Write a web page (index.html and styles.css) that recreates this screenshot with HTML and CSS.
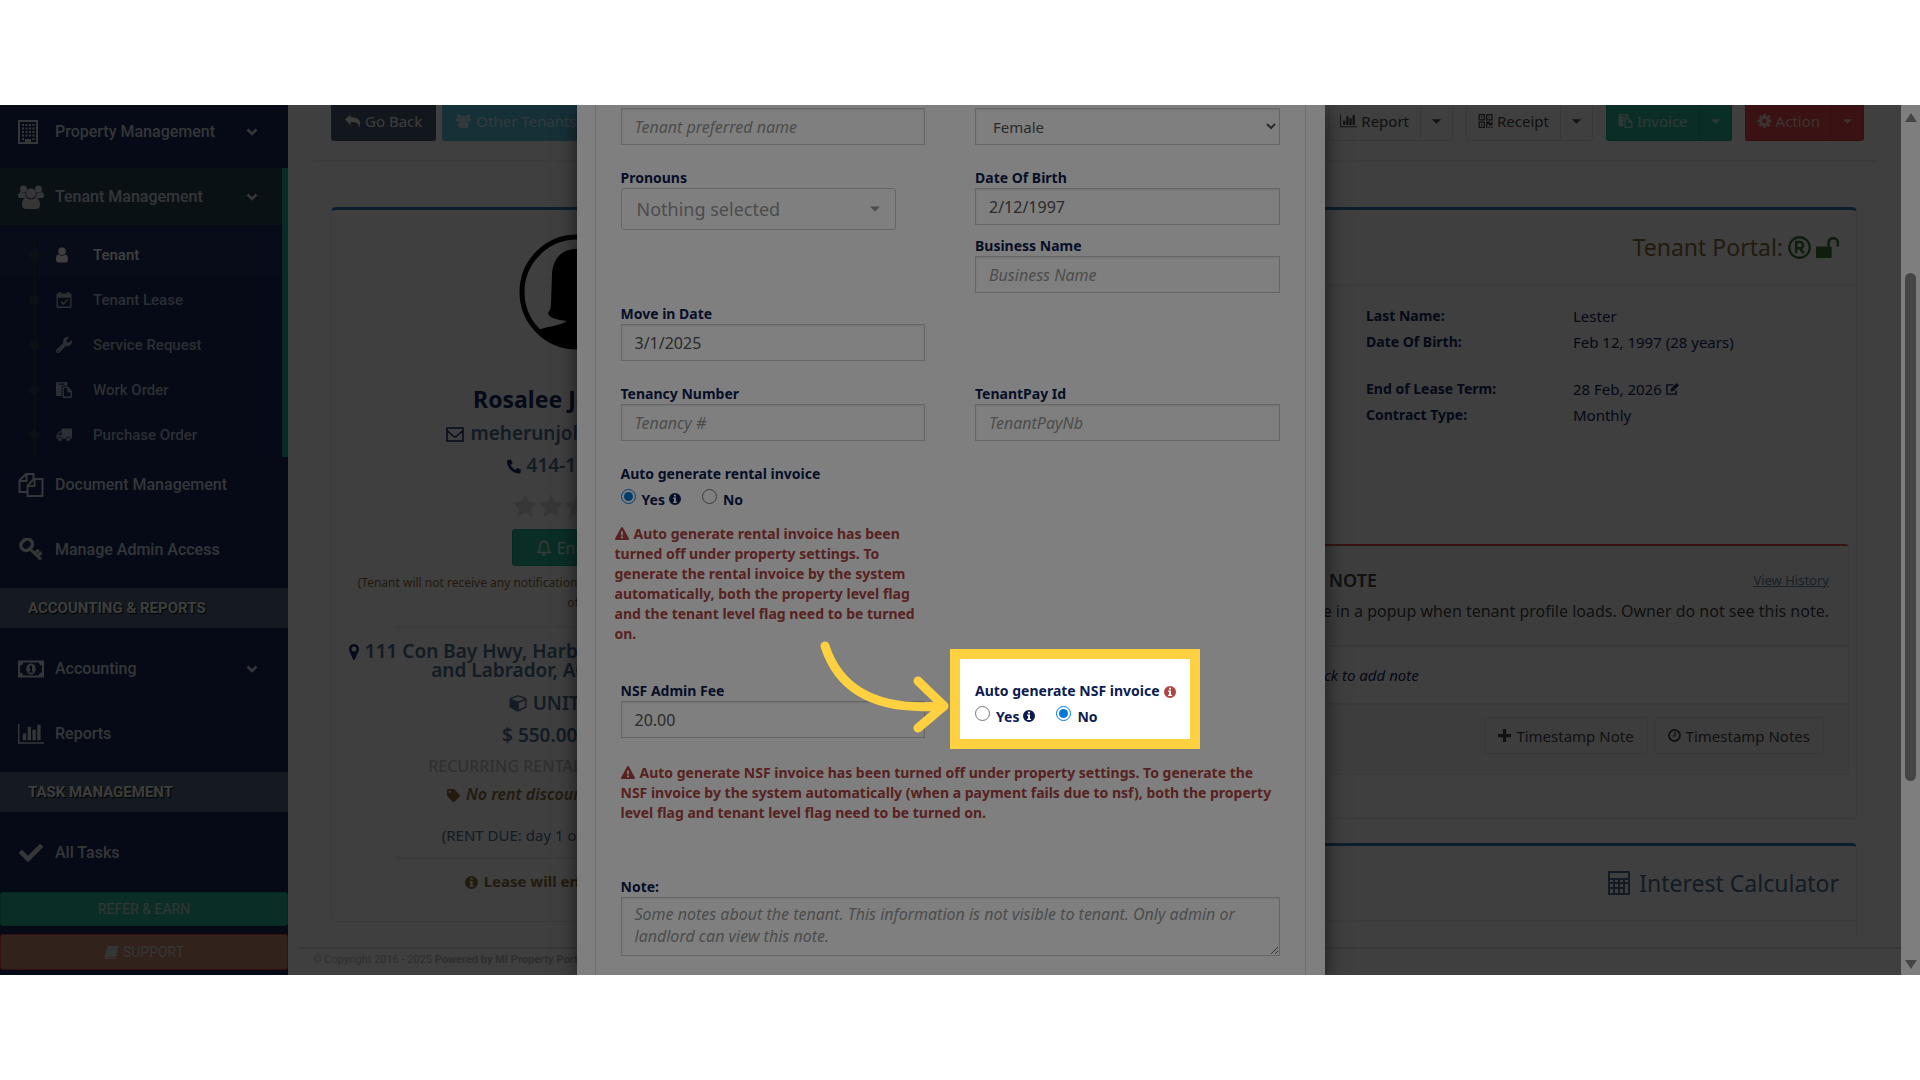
FILE: index.html
```html
<!DOCTYPE html>
<html lang="en">
<head>
    <meta charset="UTF-8">
    <meta name="viewport" content="width=device-width, initial-scale=1.0">
    <title>Tenant - Edit</title>
    <link rel="stylesheet" href="styles.css">
</head>
<body>

<!-- Icon set -->
<svg class="icon-defs" aria-hidden="true">
    <symbol id="i-building" viewBox="0 0 20 24"><path fill-rule="evenodd" d="M0 0h20v24H0zM2 2v20h5v-3h6v3h5V2zM4 4h2v2H4zm3.500 0h2v2h-2zm3.500 0h2v2h-2zm3.500 0h2v2h-2zM4 7.500h2v2H4zm3.500 0h2v2h-2zm3.500 0h2v2h-2zm3.500 0h2v2h-2zM4 11h2v2H4zm3.500 0h2v2h-2zm3.500 0h2v2h-2zm3.500 0h2v2h-2zM4 14.500h2v2H4zm3.500 0h2v2h-2zm3.500 0h2v2h-2zm3.500 0h2v2h-2zM4 18h2v2H4zm10.500 0h2v2h-2z"/></symbol>
    <symbol id="i-users" viewBox="0 0 26 24"><circle cx="5.500" cy="4" r="3.500"/><circle cx="20.500" cy="4" r="3.500"/><path d="M0 11c0-3 1.500-4 3-4 1 1 3 1 4.500.5C7 10 8 11.500 9 13H3c-2 0-3-.5-3-2zM26 11c0-3-1.500-4-3-4-1 1-3 1-4.500.5C19 10 18 11.500 17 13h6c2 0 3-.5 3-2z"/><circle cx="13" cy="8.500" r="5"/><path d="M4 20c0-5 2-7 4.500-7.200 2.500 2 6.500 2 9 0C20 13 22 15 22 20c0 2.500-1.500 4-4 4H8c-2.500 0-4-1.500-4-4z"/></symbol>
    <symbol id="i-user" viewBox="0 0 12 15"><circle cx="6" cy="3.800" r="3.800"/><path d="M0 12c0-3.500 1-4.800 2.600-5 2 1.800 4.800 1.800 6.800 0C11 7.200 12 8.500 12 12c0 2-1 3-2.500 3h-7C1 15 0 14 0 12z"/></symbol>
    <symbol id="i-calendar" viewBox="0 0 16 17"><path fill-rule="evenodd" d="M0 3c0-1 .5-1.500 2-1.500V1c0-1.300 3-1.300 3 0v.5h6V1c0-1.300 3-1.300 3 0v.5c1.500 0 2 .5 2 1.500v12.500c0 1-.5 1.500-1.500 1.500h-13C.5 17 0 16.500 0 15.500zM1.500 6v9.500h13V6z"/><path d="M4.500 10l2.700 2.800L12 8" fill="none" stroke="currentColor" stroke-width="1.500"/></symbol>
    <symbol id="i-wrench" viewBox="0 0 512 512"><path fill-rule="evenodd" d="M507.730 109.100c-2.240-9.030-13.540-12.090-20.120-5.510l-74.360 74.360-67.880-11.310-11.310-67.880 74.360-74.360c6.620-6.620 3.430-17.900-5.660-20.160-47.380-11.740-99.550.91-136.580 37.930-39.640 39.640-50.550 97.100-34.050 147.200L18.740 402.760c-24.990 24.990-24.990 65.510 0 90.500 24.990 24.990 65.510 24.990 90.500 0l213.210-213.210c50.120 16.710 107.470 5.680 147.370-34.220 37.070-37.070 49.700-89.320 37.910-136.730zM64 472c-13.250 0-24-10.750-24-24 0-13.260 10.750-24 24-24s24 10.740 24 24c0 13.250-10.750 24-24 24z"/></symbol>
    <symbol id="i-paste" viewBox="0 0 17 17"><path fill-rule="evenodd" d="M0 1c0-.6.400-1 1-1h10c.6 0 1 .4 1 1v3H8C6.500 4 6 5 6 6v9H1c-.6 0-1-.4-1-1zm3 .5V3h6V1.500z"/><path fill-rule="evenodd" d="M7 6c0-.6.400-1 1-1h5l4 4.500V16c0 .6-.4 1-1 1H8c-.6 0-1-.4-1-1zm1.500.5v9h7V11H12V6.500z"/></symbol>
    <symbol id="i-truck" viewBox="0 0 17 14"><path d="M17 1v10h-1.500a2.500 2.500 0 0 0-5 0H6.500a2.500 2.500 0 0 0-5 0H.5V7L3.500 3H6V1c0-.6.400-1 1-1h9c.6 0 1 .4 1 1zM2 7h4V4.500H4z" fill-rule="evenodd"/><circle cx="4" cy="11.500" r="2"/><circle cx="13" cy="11.500" r="2"/></symbol>
    <symbol id="i-files" viewBox="0 0 25 24"><path d="M8.500 19H1V7.500L7.500 1H15v5M1 8h7V1M9 12.500L15.500 6H24v17H9zM9 13h7V6" fill="none" stroke="currentColor" stroke-width="2"/></symbol>
    <symbol id="i-key" viewBox="0 0 24 24"><rect x="1.700" y="2" width="12" height="10" rx="5" transform="rotate(-42 7.500 7)" fill="none" stroke="currentColor" stroke-width="3.500"/><path d="M11 11l11 10.500M16 15l4-3M19 17.500l3.500-3" fill="none" stroke="currentColor" stroke-width="3"/></symbol>
    <symbol id="i-money" viewBox="0 0 26 17"><path fill-rule="evenodd" d="M0 0h26v17H0zM5 2c0 2-1 3-3 3v7c2 0 3 1 3 3h16c0-2 1-3 3-3V5c-2 0-3-1-3-3z"/><ellipse cx="13" cy="8.500" rx="4.800" ry="5.500"/><path class="cut" d="M11 6.500l1.500-1.500h1.500v6h1.500v1h-5v-1H12V7l-.5.500z"/></symbol>
    <symbol id="i-chart" viewBox="0 0 27 21"><path d="M0 0h1.500v19H27v1.500H0zM5 10h3.500v7H5zm5-7h3.500v14H10zm5 3h3.500v11H15zm5-5h3.500v16H20z"/></symbol>
    <symbol id="i-check" viewBox="0 0 512 512"><path d="M173.898 439.404l-166.400-166.400c-9.997-9.997-9.997-26.206 0-36.204l36.203-36.204c9.997-9.998 26.207-9.998 36.204 0L192 312.690 432.095 72.596c9.997-9.997 26.207-9.997 36.204 0l36.203 36.204c9.997 9.997 9.997 26.206 0 36.204l-294.400 294.401c-9.998 9.997-26.207 9.997-36.204-.001z"/></symbol>
    <symbol id="i-chevron" viewBox="0 0 12 8"><path d="M1.500 1.500L6 6l4.500-4.500" fill="none" stroke="currentColor" stroke-width="2.600"/></symbol>
    <symbol id="i-book" viewBox="0 0 15 14"><path d="M4 0h10c1 0 1.200.6 1 1.300l-3 9.700c-.2.700-.7 1-1.500 1H3c-.8 0-.8 1 0 1h8.500L14.500 4v1l-2.700 9H2.500C.5 14-.3 12.500.2 11L3 1c.2-.7.500-1 1-1z"/></symbol>
    <symbol id="i-reply" viewBox="0 0 16 14"><path d="M6 0v3c6 0 10 1.500 10 7 0 1.500-.5 3-1.200 4 .4-5-3-6-8.800-6v3.500L0 5.500z"/></symbol>
    <symbol id="i-envelope" viewBox="0 0 18 15"><path d="M1 1h16v13H1zM1 3.500l6.500 5.700q1.500 1.200 3 0L17 3.500" fill="none" stroke="currentColor" stroke-width="1.500"/></symbol>
    <symbol id="i-phone" viewBox="0 0 512 512"><path transform="matrix(-1 0 0 1 512 0)" d="M493.400 24.600l-104-24c-11.300-2.600-22.900 3.300-27.500 13.900l-48 112c-4.200 9.800-1.400 21.300 6.900 28l60.600 49.600c-36 76.700-98.900 140.500-177.200 177.200l-49.600-60.600c-6.800-8.300-18.200-11.100-28-6.900l-112 48C3.900 366.500-2 378.100.6 389.400l24 104C27.100 504.200 36.700 512 48 512c256.100 0 464-207.500 464-464 0-11.200-7.700-20.900-18.600-23.400z"/></symbol>
    <symbol id="i-star" viewBox="0 0 24 23"><path d="M12 0l3.600 7.500 8.400 1.200-6 5.800L19.500 23 12 19l-7.500 4L6 14.500 0 8.700l8.400-1.200z"/></symbol>
    <symbol id="i-bell" viewBox="0 0 14 16"><path d="M7 1.500C4 1.500 3 4 3 6.500 3 9.500 2 11 1 12.500h12c-1-1.500-2-3-2-6C11 4 10 1.500 7 1.500zM7 0v2M5.500 14q1.500 2 3 0" fill="none" stroke="currentColor" stroke-width="1.400"/></symbol>
    <symbol id="i-marker" viewBox="0 0 10 16"><path fill-rule="evenodd" d="M5 0a5 5 0 0 1 5 5c0 1-.2 1.700-.5 2.300L6 15.300c-.4.900-1.600.9-2 0L.5 7.300C.2 6.700 0 6 0 5a5 5 0 0 1 5-5zm0 2.500a2.500 2.500 0 1 0 0 5 2.500 2.500 0 0 0 0-5z"/></symbol>
    <symbol id="i-cube" viewBox="0 0 18 18"><path fill-rule="evenodd" d="M9 0l9 3.500V13l-9 5-9-5V3.500zM2 4.200l7 2.800 7-2.800-7-2.700zM16.500 5.700L10 8.400v7.300l6.500-3.500z"/></symbol>
    <symbol id="i-tag" viewBox="0 0 512 512"><path fill-rule="evenodd" d="M0 252.118V48C0 21.490 21.490 0 48 0h204.118a48 48 0 0 1 33.941 14.059l211.882 211.882c18.745 18.745 18.745 49.137 0 67.882L293.823 497.941c-18.745 18.745-49.137 18.745-67.882 0L14.059 286.059A48 48 0 0 1 0 252.118zM112 64c-26.510 0-48 21.490-48 48s21.490 48 48 48 48-21.490 48-48-21.490-48-48-48z"/></symbol>
    <symbol id="i-info" viewBox="0 0 12 12"><path fill-rule="evenodd" d="M6 0a6 6 0 1 1 0 12A6 6 0 0 1 6 0zM5 1.800v1.700h2V1.800zM4 4.500v1.200h1v3H4V10h4V8.700H7V4.500z"/></symbol>
    <symbol id="i-warning" viewBox="0 0 14 13"><path fill-rule="evenodd" d="M7 0c.4 0 .7.200.9.500l6 11c.3.700 0 1.500-.9 1.500H1c-.9 0-1.200-.8-.9-1.500l6-11C6.300.2 6.600 0 7 0zM6 4.500L6.200 8.500h1.600L8 4.500zM6 9.500v1.700h2V9.500z"/></symbol>
    <symbol id="i-qr" viewBox="0 0 13 13"><path fill-rule="evenodd" d="M0 0h6v6H0zM1.200 1.200v3.600h3.600V1.200zM7 0h6v6H7zM8.200 1.200v3.600h3.600V1.200zM0 7h6v6H0zm1.200 1.200v3.600h3.600V8.200zM2.400 2.400h1.200v1.200H2.400zm7 0h1.200v1.200H9.400zm-7 7h1.200v1.200H2.400zM7 7h3.500v1.200H12V7h1v3.500H9.500V9.300H8.300V13H7zm2.500 4.700h1.200V13H9.500zm2.300 0H13V13h-1.200z"/></symbol>
    <symbol id="i-cog" viewBox="0 0 14 14"><path d="M7 0v14M0 7h14M2 2l10 10M12 2L2 12" stroke="currentColor" stroke-width="2.700"/><circle cx="7" cy="7" r="3.700" fill="none" stroke="currentColor" stroke-width="3"/><circle class="hole" cx="7" cy="7" r="2.200"/></symbol>
    <symbol id="i-unlock" viewBox="0 0 22 22"><rect y="10" width="15" height="11" rx="1"/><path d="M12 10V6.500a4.500 4.500 0 0 1 9 0V10" fill="none" stroke="currentColor" stroke-width="2.500"/></symbol>
    <symbol id="i-registered" viewBox="0 0 24 24"><circle cx="12" cy="12" r="10.700" fill="none" stroke="currentColor" stroke-width="2.400"/><path d="M8.500 18V6.200h4a3.200 3.200 0 0 1 0 6.600h-4M12.500 12.800L16.500 18" fill="none" stroke="currentColor" stroke-width="2.600"/></symbol>
    <symbol id="i-edit" viewBox="0 0 15 13"><path d="M11 8v4H1V2h7" fill="none" stroke="currentColor" stroke-width="1.500"/><path d="M5 9V6.500L11.500 0 14 2.500 7.500 9z"/></symbol>
    <symbol id="i-clock" viewBox="0 0 13 13"><circle cx="6.500" cy="6.500" r="5.500" fill="none" stroke="currentColor" stroke-width="1.900"/><path d="M7 3v4H4.500" fill="none" stroke="currentColor" stroke-width="1.200"/></symbol>
    <symbol id="i-plus" viewBox="0 0 12 12"><path d="M4.500 0h3v4.500H12v3H7.500V12h-3V7.500H0v-3h4.500z"/></symbol>
    <symbol id="i-calc" viewBox="0 0 22 24"><path fill-rule="evenodd" d="M1 0h20c.6 0 1 .4 1 1v22c0 .6-.4 1-1 1H1c-.6 0-1-.4-1-1V1c0-.6.400-1 1-1zm1 2v5h18V2zm0 7v2h3V9zm5 0v2h3V9zm5 0v2h3V9zm5 0v2h3V9zM2 13v3h3v-3zm5 0v3h3v-3zm5 0v3h3v-3zm5 0v9h3v-9zM2 18v4h3v-4zm5 0v4h3v-4zm5 0v4h3v-4z"/></symbol>
    <symbol id="i-caret" viewBox="0 0 8 4"><path d="M0 0h8L4 4z"/></symbol>
</svg>

<div class="window">

    <div class="app">
        <!-- Left navigation -->
        <nav class="sidebar">
            <a href="#" class="nav-item"><svg class="nav-icon"><use href="#i-building"/></svg><span>Property Management</span><svg class="chev"><use href="#i-chevron"/></svg></a>
            <div class="nav-group">
                <a href="#" class="nav-item active"><svg class="nav-icon"><use href="#i-users"/></svg><span>Tenant Management</span><svg class="chev"><use href="#i-chevron"/></svg></a>
                <div class="subnav">
                    <a href="#" class="current"><svg><use href="#i-user"/></svg>Tenant</a>
                    <a href="#"><svg><use href="#i-calendar"/></svg>Tenant Lease</a>
                    <a href="#"><svg><use href="#i-wrench"/></svg>Service Request</a>
                    <a href="#"><svg><use href="#i-paste"/></svg>Work Order</a>
                    <a href="#"><svg><use href="#i-truck"/></svg>Purchase Order</a>
                </div>
            </div>
            <a href="#" class="nav-item"><svg class="nav-icon"><use href="#i-files"/></svg><span>Document Management</span></a>
            <a href="#" class="nav-item"><svg class="nav-icon"><use href="#i-key"/></svg><span>Manage Admin Access</span></a>
            <h2 class="nav-title">ACCOUNTING &amp; REPORTS</h2>
            <a href="#" class="nav-item"><svg class="nav-icon"><use href="#i-money"/></svg><span>Accounting</span><svg class="chev"><use href="#i-chevron"/></svg></a>
            <a href="#" class="nav-item"><svg class="nav-icon"><use href="#i-chart"/></svg><span>Reports</span></a>
            <h2 class="nav-title">TASK MANAGEMENT</h2>
            <a href="#" class="nav-item"><svg class="nav-icon"><use href="#i-check"/></svg><span>All Tasks</span></a>
            <button class="side-btn refer">REFER &amp; EARN</button>
            <button class="side-btn support"><svg><use href="#i-book"/></svg>SUPPORT</button>
        </nav>

        <!-- Tenant page -->
        <main class="page">
            <div class="toolbar">
                <button class="btn back"><svg><use href="#i-reply"/></svg>Go Back</button>
                <button class="btn others"><svg><use href="#i-users"/></svg>Other Tenants</button>
                <div class="btn-group first"><button class="btn"><svg class="wide"><use href="#i-chart"/></svg>Report</button><button class="btn drop" aria-label="Report menu"><svg><use href="#i-caret"/></svg></button></div>
                <div class="btn-group"><button class="btn"><svg><use href="#i-qr"/></svg>Receipt</button><button class="btn drop" aria-label="Receipt menu"><svg><use href="#i-caret"/></svg></button></div>
                <div class="btn-group green"><button class="btn"><svg><use href="#i-paste"/></svg>Invoice</button><button class="btn drop" aria-label="Invoice menu"><svg><use href="#i-caret"/></svg></button></div>
                <div class="btn-group red"><button class="btn"><svg><use href="#i-cog"/></svg>Action</button><button class="btn drop" aria-label="Action menu"><svg><use href="#i-caret"/></svg></button></div>
            </div>

            <div class="columns">
                <section class="card profile">
                    <svg class="avatar" viewBox="0 0 116 116"><circle cx="58" cy="58" r="55" fill="none" stroke="#000" stroke-width="5"/><path d="M58 15c-16 0-24 10-25 25l-1 30c0 4-1 6-3 9 1 5 9 7 19 8-8 5-18 5-29 9a56 56 0 0 0 78 0c-11-4-21-4-29-9 10-1 18-3 19-8-2-3-3-5-3-9l-1-30c-1-15-9-25-25-25z"/></svg>
                    <h1>Rosalee Joy Lester</h1>
                    <p class="contact"><svg><use href="#i-envelope"/></svg>meherunjolly@gmail.com</p>
                    <p class="contact"><svg class="small"><use href="#i-phone"/></svg>414-123-4567</p>
                    <div class="stars"><svg><use href="#i-star"/></svg><svg><use href="#i-star"/></svg><svg><use href="#i-star"/></svg><svg><use href="#i-star"/></svg><svg><use href="#i-star"/></svg></div>
                    <button class="enable"><svg><use href="#i-bell"/></svg>Enabled</button>
                    <p class="hint">(Tenant will not receive any notification while the email alerts setting is turned<br>off)</p>
                    <hr>
                    <p class="address"><svg><use href="#i-marker"/></svg>111 Con Bay Hwy, Harbour View, Newfoundland<br>and Labrador, A0K 1M0, Canada</p>
                    <p class="unit"><svg><use href="#i-cube"/></svg>UNIT # 1012</p>
                    <p class="unit">$ 550.00 /month</p>
                    <p class="recurring">RECURRING RENTAL INVOICE AMOUNT</p>
                    <p class="discount"><svg><use href="#i-tag"/></svg>No rent discount has been found</p>
                    <p class="due">(RENT DUE: day 1 of every new month)</p>
                    <hr>
                    <p class="lease"><svg><use href="#i-info"/></svg>Lease will end in 11 months</p>
                </section>

                <div class="right">
                    <section class="card details">
                        <h2 class="portal">Tenant Portal: <svg><use href="#i-registered"/></svg><svg><use href="#i-unlock"/></svg></h2>
                        <dl>
                            <dt>Last Name:</dt><dd>Lester</dd>
                            <dt>Date Of Birth:</dt><dd>Feb 12, 1997 (28 years)</dd>
                            <dt class="space">End of Lease Term:</dt><dd class="space">28 Feb, 2026 <svg><use href="#i-edit"/></svg></dd>
                            <dt>Contract Type:</dt><dd>Monthly</dd>
                        </dl>
                        <div class="note-card">
                            <header>
                                <div class="note-head"><h3>TENANT NOTE</h3><a href="#">View History</a></div>
                                <p>Display this note in a popup when tenant profile loads. Owner do not see this note.</p>
                            </header>
                            <p class="add-note">Just click to add note</p>
                            <footer>
                                <button class="btn plain"><svg><use href="#i-plus"/></svg>Timestamp Note</button>
                                <button class="btn plain"><svg><use href="#i-clock"/></svg>Timestamp Notes</button>
                            </footer>
                        </div>
                    </section>
                    <section class="card calculator">
                        <h2><svg><use href="#i-calc"/></svg>Interest Calculator</h2>
                    </section>
                </div>
            </div>

            <footer class="copyright">&copy; Copyright 2016 - 2025 <b>Powered by MI Property Portal</b></footer>
        </main>
    </div>

    <!-- Edit dialog -->
    <div class="backdrop">
        <div class="scrollbar"><svg viewBox="0 0 12 9"><path d="M6 0l6 9H0z"/></svg><span></span><svg viewBox="0 0 12 9"><path d="M0 0h12L6 9z"/></svg></div>
        <div class="modal" role="dialog">
            <form class="panel">
                <div class="row first">
                    <input class="control" type="text" placeholder="Tenant preferred name" aria-label="Tenant preferred name">
                    <select class="control" aria-label="Gender"><option>Female</option></select>
                </div>
                <div class="row">
                    <div class="field">
                        <label for="pronouns">Pronouns</label>
                        <button type="button" id="pronouns" class="picker">Nothing selected<svg><use href="#i-caret"/></svg></button>
                    </div>
                    <div class="stack">
                        <div class="field">
                            <label for="dob">Date Of Birth</label>
                            <input id="dob" class="control" type="text" value="2/12/1997">
                        </div>
                        <div class="field">
                            <label for="business">Business Name</label>
                            <input id="business" class="control" type="text" placeholder="Business Name">
                        </div>
                    </div>
                </div>
                <div class="row tight">
                    <div class="field">
                        <label for="movein">Move in Date</label>
                        <input id="movein" class="control" type="text" value="3/1/2025">
                    </div>
                </div>
                <div class="row">
                    <div class="field">
                        <label for="tenancy">Tenancy Number</label>
                        <input id="tenancy" class="control" type="text" placeholder="Tenancy #">
                    </div>
                    <div class="field">
                        <label for="payid">TenantPay Id</label>
                        <input id="payid" class="control" type="text" placeholder="TenantPayNb">
                    </div>
                </div>
                <div class="row">
                    <fieldset>
                        <legend>Auto generate rental invoice</legend>
                        <div class="radios">
                            <label><input type="radio" name="rental" checked>Yes<svg><use href="#i-info"/></svg></label>
                            <label><input type="radio" name="rental">No</label>
                        </div>
                        <p class="alert narrow"><svg><use href="#i-warning"/></svg>Auto generate rental invoice has been turned off under property settings. To generate the rental invoice by the system automatically, both the property level flag and the tenant level flag need to be turned on.</p>
                    </fieldset>
                </div>
                <div class="row loose">
                    <div class="field">
                        <label for="nsf">NSF Admin Fee</label>
                        <input id="nsf" class="control" type="text" value="20.00">
                    </div>
                    <div class="target">
                        <fieldset>
                            <legend>Auto generate NSF invoice<svg class="danger"><use href="#i-info"/></svg></legend>
                            <div class="radios">
                                <label><input type="radio" name="auto-nsf">Yes<svg><use href="#i-info"/></svg></label>
                                <label><input type="radio" name="auto-nsf" checked>No</label>
                            </div>
                        </fieldset>
                        <div class="spotlight"></div>
                        <svg class="arrow" viewBox="0 0 135 103"><path d="M10 10C24 54 62 75 126 70M103 45l26 25-26 22"/></svg>
                    </div>
                </div>
                <p class="alert"><svg><use href="#i-warning"/></svg>Auto generate NSF invoice has been turned off under property settings. To generate the NSF invoice by the system automatically (when a payment fails due to nsf), both the property level flag and tenant level flag need to be turned on.</p>
                <div class="field note">
                    <label for="note">Note:</label>
                    <textarea id="note" class="control" placeholder="Some notes about the tenant. This information is not visible to tenant. Only admin or landlord can view this note."></textarea>
                </div>
            </form>
        </div>
    </div>

</div>

</body>
</html>
```

FILE: styles.css
```css
* {
    box-sizing: border-box;
}

body {
    margin: 0;
    padding: 105px 0;
    height: 100vh;
    background: #fff;
    font-family: "Noto Sans", sans-serif;
    font-size: 15px;
    color: #142860;
}

svg {
    fill: currentColor;
    flex: none;
}

h1, h2, h3, p, dl, dd {
    margin: 0;
}

a {
    color: inherit;
    text-decoration: none;
}

button, input, select, textarea {
    font: inherit;
}

.icon-defs {
    position: absolute;
    width: 0;
    height: 0;
}

.cut {
    fill: #142858;
}

.hole {
    fill: #e84a4c;
}

.window {
    position: relative;
    height: 100%;
    overflow: hidden;
}

.app {
    display: flex;
    height: 100%;
    background: #fcfcfc;
}

/* ---------- sidebar ---------- */
.sidebar {
    flex: none;
    display: flex;
    flex-direction: column;
    width: 288px;
    background: #142858;
    color: #d0d8e0;
    font-family: Roboto, sans-serif;
    font-weight: 500;
}

.nav-item {
    display: flex;
    align-items: center;
    flex: none;
    height: 65px;
    padding: 0 30px 10px 18px;
    font-size: 16px;
}

.nav-item:first-child {
    height: 63px;
}

.nav-icon {
    width: 26px;
    height: 24px;
    margin-right: 11px;
}

.nav-item:first-child .nav-icon {
    width: 20px;
    margin-right: 17px;
}

.nav-item .chev {
    width: 12px;
    height: 8px;
    margin-left: auto;
}

.nav-item.active {
    height: 57px;
    padding-bottom: 0;
    padding-right: 24px;
    background: #2a4450;
}

.nav-item.active .nav-icon {
    width: 26px;
    margin-right: 11px;
}

.nav-group {
    flex: none;
    border-right: 6px solid #1ab394;
}

.subnav {
    position: relative;
    padding-top: 7px;
    font-size: 15px;
    color: #acbccc;
}

.subnav::before {
    content: "";
    position: absolute;
    left: 34px;
    top: 8px;
    bottom: 0;
    border-left: 1px solid #2a4450;
}

.subnav a {
    display: flex;
    align-items: center;
    height: 45px;
    padding-left: 29px;
}

.subnav a::before {
    content: "";
    width: 10px;
    height: 10px;
    border-radius: 50%;
    background: #2a4450;
    margin-right: 17px;
}

.subnav .current {
    background: #1e3260;
    color: #fff;
}

.subnav svg {
    width: 16px;
    height: 16px;
    margin-right: 21px;
}

.subnav .current svg {
    width: 12px;
    margin-right: 25px;
}

.nav-title {
    flex: none;
    margin: 1px 0 13px;
    padding-left: 28px;
    background: #506880;
    font-size: 15px;
    line-height: 40px;
    color: #f4f4f4;
    text-shadow: 1px 1px 1px #000;
}

.side-btn {
    flex: none;
    height: 34px;
    margin-bottom: 8px;
    border: 1px solid #18a689;
    border-radius: 3px;
    background: #28b898;
    color: #d0d8d8;
    font-size: 14px;
    font-weight: 400;
}

.side-btn.refer {
    margin-top: 2px;
}

.side-btn.support {
    height: 36px;
    background: #c88870;
    border-color: #e04040;
}

.side-btn svg {
    width: 15px;
    height: 13px;
    margin-right: 4px;
    vertical-align: -2px;
}

/* ---------- page ---------- */
.page {
    flex: 1;
    min-width: 0;
    display: flex;
    flex-direction: column;
    padding: 0 30px 0 12px;
}

.toolbar {
    display: flex;
    gap: 6px;
    height: 57px;
    margin: 0 14px 0 13px;
    padding: 0 12px 21px 18px;
    border-bottom: 2px solid #eee;
}

.btn {
    display: flex;
    align-items: center;
    gap: 5px;
    height: 36px;
    padding: 0 13px 4px;
    border: 1px solid #e4e4e4;
    border-top: 0;
    border-radius: 0 0 3px 3px;
    background: transparent;
    color: #444;
    white-space: nowrap;
}

.btn svg {
    width: 15px;
    height: 14px;
}

.btn .wide {
    width: 17px;
}

.back {
    background: #465c70;
    border-color: #465c70;
    color: #f4f4f4;
}

.others {
    background: #5bc0de;
    border-color: #5bc0de;
    color: #d0e8f0;
}

.btn-group {
    display: flex;
    margin-left: 7px;
}

.btn-group.first {
    margin-left: auto;
}

.btn-group .btn:first-child {
    gap: 4px;
    padding: 0 11px 4px;
    border-bottom-right-radius: 0;
}

.btn-group .drop {
    width: 32px;
    padding: 0 11px 2px;
    border-left: 0;
    border-bottom-left-radius: 0;
}

.drop svg {
    width: 9px;
    height: 5px;
}

.green .btn {
    background: #28b898;
    border-color: #18a080;
    color: #c0e0d8;
}

.red .btn {
    background: #e84a4c;
    border-color: #d84040;
    color: #f0c8c8;
}

.columns {
    display: flex;
    gap: 20px;
    flex: 1;
    min-height: 0;
    padding: 45px 33px 0 31px;
}

.card {
    border: 1px solid #eaeaea;
    border-top: 3px solid #337ab7;
    border-radius: 5px;
}

.profile {
    flex: none;
    width: 492px;
    height: 715px;
    padding: 24px 12px;
    text-align: center;
    white-space: nowrap;
}

.profile svg {
    vertical-align: -2px;
    margin-right: 6px;
}

.profile .avatar {
    display: block;
    width: 116px;
    height: 116px;
    margin: 0 auto 31px;
    color: #000;
}

.profile h1 {
    font-size: 23px;
    line-height: 36px;
}

.contact, .unit {
    font-size: 19px;
    font-weight: 600;
    line-height: 32px;
    color: #4f6f90;
}

.contact svg {
    width: 18px;
    height: 15px;
    color: #142860;
}

.contact .small {
    width: 14px;
}

.stars {
    display: flex;
    justify-content: center;
    gap: 2px;
    margin: 13px 0 12px;
    color: #ddd;
}

.stars svg {
    width: 24px;
    height: 23px;
    margin: 0;
}

.enable {
    width: 130px;
    height: 37px;
    border: 1px solid #18a689;
    border-radius: 3px;
    background: #28b898;
    color: #d8f0e8;
    font-size: 16px;
}

.enable svg {
    width: 14px;
    height: 16px;
}

.hint {
    margin: 7px 0 13px;
    font-size: 12px;
    line-height: 20px;
    color: #8a6d3b;
}

.profile hr {
    width: 362px;
    margin: 0 auto;
    border: 0;
    border-top: 2px solid #eee;
}

.address {
    margin: 14px 0 7px;
    font-size: 19px;
    font-weight: 600;
    line-height: 19px;
    color: #4f6f90;
}

.address svg {
    width: 10px;
    height: 16px;
    color: #142860;
}

.unit svg {
    width: 18px;
    height: 17px;
}

.recurring {
    font-size: 16px;
    font-weight: 500;
    line-height: 30px;
    color: #c0c0c0;
}

.discount {
    margin-bottom: 14px;
    font-size: 16px;
    font-weight: 600;
    font-style: italic;
    line-height: 26px;
    color: #8a6d3b;
}

.discount svg, .lease svg {
    width: 13px;
    height: 13px;
}

.due {
    margin-bottom: 8px;
    line-height: 28px;
    color: #4f6f90;
}

.lease {
    margin-top: 8px;
    font-weight: 700;
    line-height: 28px;
    color: #8a6d3b;
}

.right {
    flex: 1;
    min-width: 0;
    display: flex;
    flex-direction: column;
    gap: 24px;
}

.details {
    height: 612px;
    padding-right: 7px;
    padding-left: 7px;
}

.card h2 {
    display: flex;
    align-items: center;
    justify-content: flex-end;
    gap: 5px;
    height: 76px;
    padding: 0 17px;
    margin: 0 -7px;
    border-bottom: 2px solid #eee;
    font-size: 23px;
    font-weight: 400;
    color: #8a6d3b;
}

.portal svg {
    width: 23px;
    height: 23px;
    color: #3c763d;
}

dl {
    display: grid;
    grid-template-columns: 207px 276px;
    justify-content: end;
    height: 258px;
    padding-top: 17px;
    grid-auto-rows: max-content;
    line-height: 26px;
}

dt {
    font-size: 14px;
    font-weight: 700;
}

.space {
    margin-top: 21px;
}

dl svg {
    width: 14px;
    height: 12px;
}

.note-card {
    height: 231px;
    border: 1px solid #eaeaea;
    border-top: 2px solid #da4f4f;
    border-radius: 4px;
    color: #444;
}

.note-card header {
    height: 101px;
    padding: 19px 19px 0;
    background: #f6f6f6;
    border-bottom: 2px solid #eaeaea;
    text-align: right;
}

.note-head {
    display: flex;
    justify-content: flex-end;
    align-items: center;
    line-height: 30px;
}

.note-head h3 {
    font-size: 18px;
    font-weight: 600;
}

.note-head a {
    flex: 0 0 452px;
    font-size: 13px;
    color: #6080a0;
    text-decoration: underline;
}

.note-card header p {
    font-size: 16px;
    line-height: 32px;
}

.add-note {
    height: 58px;
    border-bottom: 2px solid #eaeaea;
    font-style: italic;
    line-height: 56px;
    text-align: center;
    color: #142860;
}

.note-card footer {
    display: flex;
    justify-content: flex-end;
    gap: 6px;
    height: 69px;
    padding: 12px 24px;
    background: #f6f6f6;
}

.btn.plain {
    height: 37px;
    padding: 0 13px;
    border: 1px solid #e0e0e0;
    border-radius: 3px;
}

.plain svg {
    width: 13px;
    height: 13px;
}

.calculator {
    height: 95px;
    border-bottom: 0;
    border-bottom-left-radius: 0;
    border-bottom-right-radius: 0;
}

.calculator h2 {
    margin: 0;
    gap: 9px;
    color: #4f6f90;
}

.calculator svg {
    width: 22px;
    height: 24px;
}

.copyright {
    height: 28px;
    margin-right: -19px;
    padding: 4px 13px;
    border-top: 2px solid #ddd;
    font-family: Roboto, sans-serif;
    font-size: 11px;
    color: #bbb;
}

/* ---------- modal ---------- */
.backdrop {
    position: absolute;
    inset: 0;
    display: flex;
    justify-content: center;
    padding-right: 19px;
    overflow: hidden;
    background: rgba(0, 0, 0, .5);
}

.scrollbar {
    position: absolute;
    top: 0;
    right: 0;
    bottom: 0;
    display: flex;
    flex-direction: column;
    align-items: center;
    width: 19px;
    padding: 8px 0 6px;
    background: #fcfcfc;
    color: #8a8a8a;
}

.scrollbar svg {
    width: 12px;
    height: 9px;
}

.scrollbar span {
    width: 11px;
    height: 508px;
    margin: 151px 0 auto;
    border-radius: 6px;
    background: #8a8a8a;
}

.modal {
    width: 748px;
    padding: 0 19px 0 18px;
    background: #fff;
    box-shadow: 0 5px 20px rgba(0, 0, 0, .6);
    color: #0c1c50;
}

.panel {
    height: 100%;
    padding: 3px 25px 0;
    border: solid #ddd;
    border-width: 0 1px;
}

.row {
    display: grid;
    grid-template-columns: 1fr 1fr;
    gap: 50px;
    margin-top: 23px;
}

.row.first {
    margin-top: 0;
}

.row.tight {
    margin-top: 11px;
}

.row.loose {
    margin-top: 37px;
}

.stack {
    display: grid;
    gap: 11px;
}

.field label, legend {
    display: block;
    padding: 0;
    font-size: 14px;
    font-weight: 700;
    line-height: 20px;
}

.control {
    display: block;
    width: 100%;
    height: 37px;
    padding: 5px 13px;
    border: 1px solid #ccc;
    border-radius: 0;
    background: #fff;
    box-shadow: inset 0 1px 2px rgba(0, 0, 0, .1);
    color: #555;
    font-size: 16px;
    outline: 0;
}

.control::placeholder {
    color: #999;
    font-style: italic;
}

select.control {
    font-size: 15px;
}

.picker {
    display: flex;
    align-items: center;
    justify-content: space-between;
    width: 275px;
    height: 42px;
    padding: 0 15px;
    border: 1px solid #ccc;
    border-radius: 3px;
    background: #fff;
    font-size: 18px;
    color: #999;
}

.picker svg {
    width: 10px;
    height: 6px;
}

fieldset {
    margin: 0;
    padding: 0;
    border: 0;
    min-width: 0;
}

.radios {
    display: flex;
    gap: 21px;
    height: 30px;
    font-size: 14px;
    font-weight: 700;
}

.radios label {
    display: flex;
    align-items: center;
}

.radios input {
    width: 15px;
    height: 15px;
    margin: 0 6px 5px 0;
    accent-color: #0078d7;
}

.radios svg, legend svg {
    width: 12px;
    height: 12px;
    margin-left: 4px;
}

legend svg {
    vertical-align: -2px;
}

.danger {
    color: #b04442;
}

.alert {
    margin-top: 25px;
    font-size: 14px;
    font-weight: 700;
    line-height: 20px;
    color: #b04442;
}

.alert.narrow {
    margin: 10px 0 0 -6px;
}

.alert svg {
    width: 14px;
    height: 13px;
    margin-right: 5px;
    vertical-align: -1px;
}

.field.note {
    margin-top: 54px;
}

textarea.control {
    height: 59px;
    line-height: 22px;
}

.target {
    position: relative;
}

/* Dims everything except the framed controls */
.spotlight {
    position: absolute;
    left: -25px;
    top: -32px;
    z-index: 2;
    width: 250px;
    height: 100px;
    border: 10px solid #ffd040;
    box-shadow: 0 0 0 2000px rgba(0, 0, 0, .5);
    pointer-events: none;
}

.arrow {
    position: absolute;
    left: -160px;
    top: -45px;
    z-index: 3;
    width: 135px;
    height: 103px;
    fill: none;
    stroke: #ffd040;
    stroke-width: 9;
    stroke-linecap: round;
    stroke-linejoin: round;
}
```
